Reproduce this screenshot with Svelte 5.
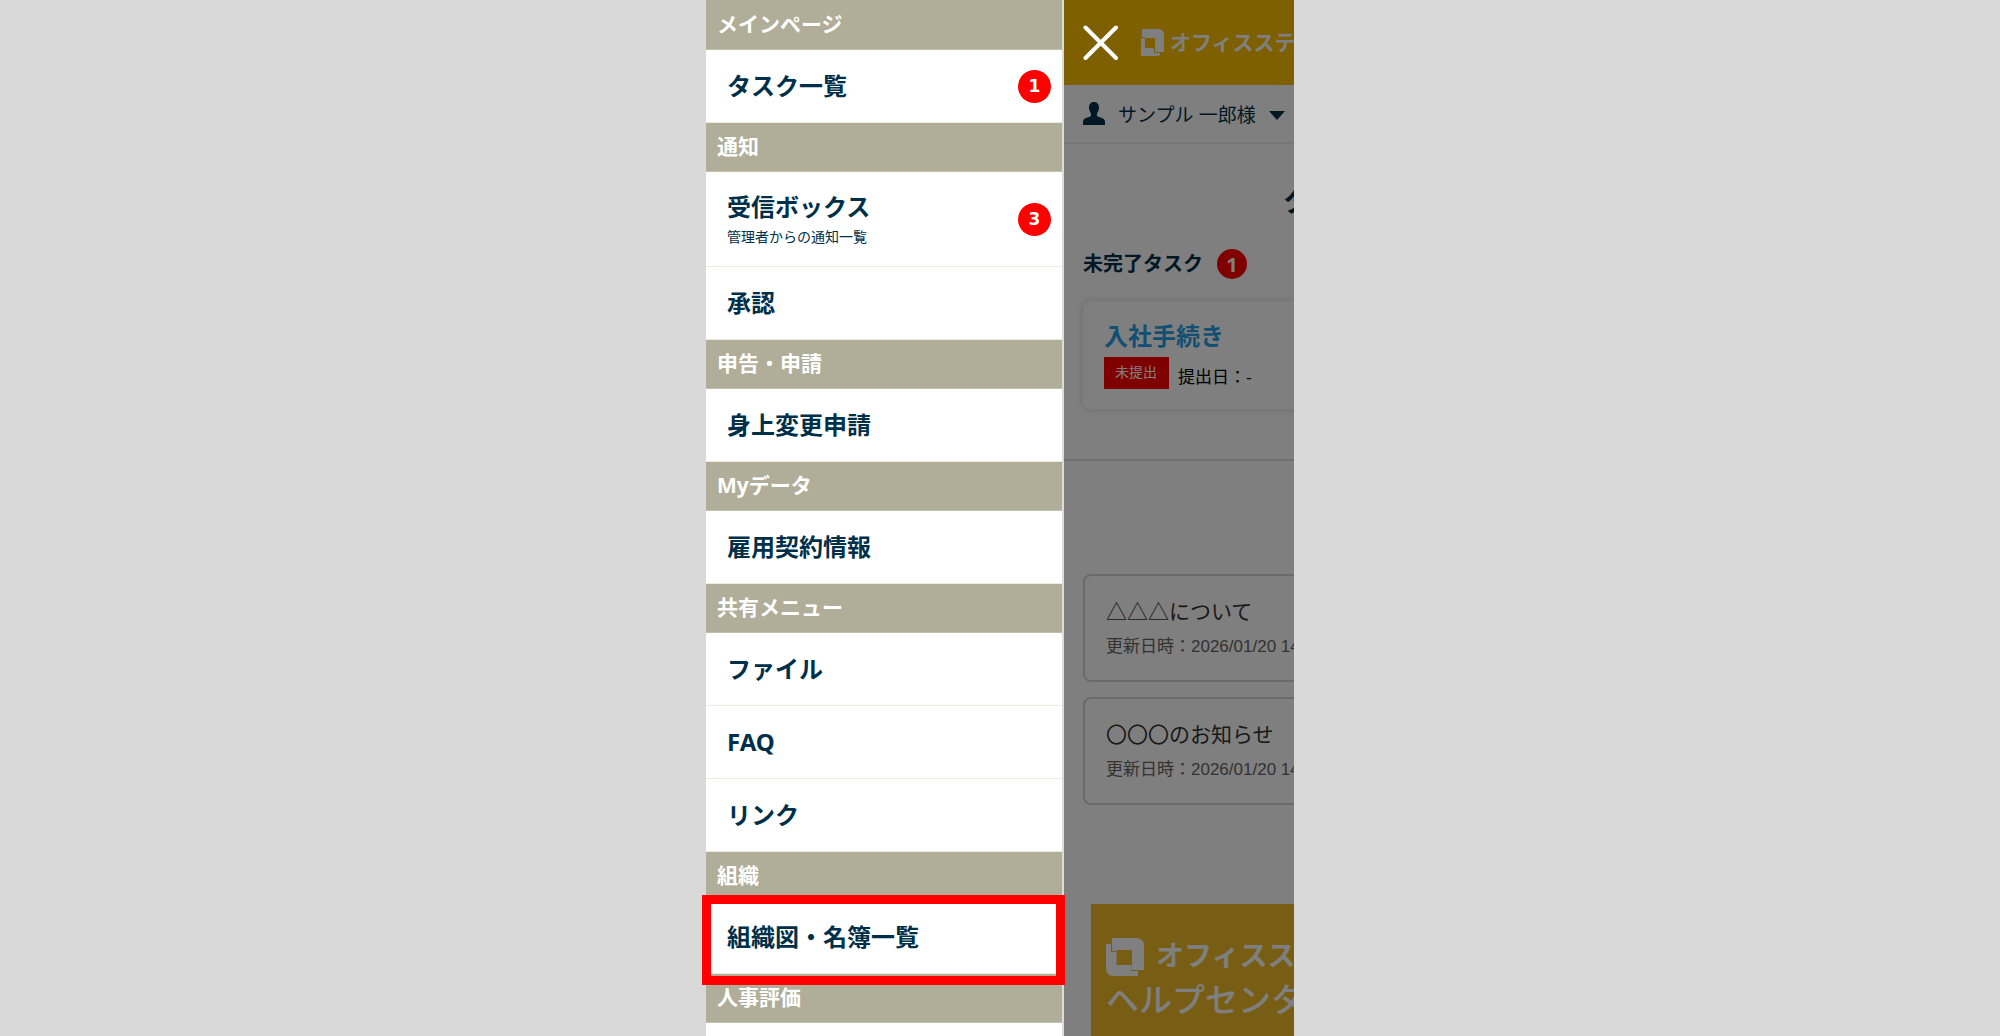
<script>
    const sections = [
        { title: "メインページ", items: [{ label: "タスク一覧", count: 1 }] },
        {
            title: "通知",
            items: [
                { label: "受信ボックス", note: "管理者からの通知一覧", count: 3 },
                { label: "承認" },
            ],
        },
        { title: "申告・申請", items: [{ label: "身上変更申請" }] },
        { title: "Myデータ", items: [{ label: "雇用契約情報" }] },
        { title: "共有メニュー", items: [{ label: "ファイル" }, { label: "FAQ" }, { label: "リンク" }] },
        { title: "組織", items: [{ label: "組織図・名簿一覧", marked: true }] },
        { title: "人事評価", items: [] },
    ];

    const notices = [
        { title: "△△△について", date: "2026/01/20 14" },
        { title: "〇〇〇のお知らせ", date: "2026/01/20 14" },
    ];
</script>

<div class="app">
    <!-- ドロワーメニュー -->
    <nav class="drawer">
        {#each sections as section}
            <h2>{section.title}</h2>
            {#each section.items as item}
                <a href="#menu" class="item" class:tall={item.note} class:marked={item.marked}>
                    <span class="label">
                        {item.label}
                        {#if item.note}
                            <small>{item.note}</small>
                        {/if}
                    </span>
                    {#if item.count}
                        <span class="count">{item.count}</span>
                    {/if}
                </a>
            {/each}
        {/each}
    </nav>

    <!-- 右に押し出された本体ページ -->
    <div class="viewport">
        <div class="page">
            <header>
                <button class="close" aria-label="閉じる">
                    <svg width="36" height="36" viewBox="0 0 36 36">
                        <path d="M2.5 2.5 33 33M33 2.5 2.5 33" stroke="#fff" stroke-width="4" stroke-linecap="round" />
                    </svg>
                </button>
                <a href="#top" class="logo">
                    <svg width="24" height="28" viewBox="0 0 24 28">
                        <path fill="#fff" d="M1 0H17Q23 0 23 6V23H14V9H4V8H1Z" />
                        <path fill="#fff" d="M0 9H4V19H13V24H19V25Q19 27 17 27H0Z" />
                    </svg>
                    <span>オフィスステ</span>
                </a>
            </header>

            <div class="userbar">
                <button class="user">
                    <svg width="22" height="23" viewBox="0 0 22 23">
                        <path fill="#003049" d="M11 0C14.500 0 16 2.500 16 5.500C16 8.500 14.500 10 14 12C13.700 14 14 14.500 16 15L19 16Q22 17 22 20V23H0V20Q0 17 3 16L6 15C8 14.500 8.300 14 8 12C7.500 10 6 8.500 6 5.500C6 2.500 7.500 0 11 0Z" />
                    </svg>
                    <span>サンプル 一郎様</span>
                    <svg class="caret" width="16" height="9" viewBox="0 0 16 9"><path fill="#003049" d="M0 0H16L8 9Z" /></svg>
                </button>
            </div>

            <main>
                <h1>タスク一覧</h1>
                <div class="subhead">
                    <h3>未完了タスク</h3>
                    <span class="count small">1</span>
                </div>
                <div class="task">
                    <a href="#task">入社手続き</a>
                    <div class="status">
                        <span class="tag">未提出</span>
                        <span class="due">提出日：-</span>
                    </div>
                </div>
            </main>

            <section class="notices">
                {#each notices as notice}
                    <a href="#notice" class="notice">
                        <span class="title">{notice.title}</span>
                        <span class="date">更新日時：{notice.date}</span>
                    </a>
                {/each}
            </section>

            <a href="#help" class="help">
                <span class="help-logo">
                    <svg width="38" height="39" viewBox="0 0 38 39">
                        <path fill="#fff" d="M6 0H30Q38 0 38 8V32H26V12H11V13H6Z" />
                        <path fill="#fff" d="M0 6H5V14H10V27H25V33H32V38H8Q0 38 0 30Z" />
                        <path fill="#fff" d="M10 13H11V27H10ZM25 27H26V32H25Z" opacity="0.5" />
                    </svg>
                    <strong>オフィスス</strong>
                </span>
                <span class="help-text">ヘルプセンタ</span>
            </a>
            <div class="overlay"></div>
        </div>
    </div>
</div>

<style>
    :global(body) {
        background: #d9d9d9;
    }

    .app {
        display: flex;
        max-width: 588px;
        height: 100vh;
        margin: 0 auto;
        font-family: "Noto Sans", "Noto Sans CJK JP", sans-serif;
        color: #003049;
        clip-path: inset(0 0 0 -10px);
    }

    a {
        color: inherit;
        text-decoration: none;
    }

    button {
        display: flex;
        align-items: center;
        padding: 0;
        border: none;
        background: none;
        color: inherit;
        font: inherit;
        cursor: pointer;
    }

    h1, h2, h3 {
        margin: 0;
    }

    /* メニュー */
    .drawer {
        flex: 0 0 358px;
        box-sizing: border-box;
        padding-top: 1px;
        border-right: 2px solid #dcdcd8;
        background: linear-gradient(#b0ad98 1px, #fff 1px);
    }

    .drawer h2 {
        box-sizing: border-box;
        height: 49px;
        padding-left: 11px;
        border-bottom: 1px solid #c4c0ae;
        background: #b0ad98;
        color: #fff;
        font-size: 21px;
        line-height: 46px;
    }

    .item {
        display: flex;
        position: relative;
        align-items: center;
        justify-content: space-between;
        box-sizing: border-box;
        height: 73px;
        padding: 0 11px 0 21px;
        border-bottom: 1px solid #f0ebdc;
        background: #fff;
        font-size: 24px;
        font-weight: bold;
        line-height: 36px;
    }

    .item.tall {
        height: 95px;
    }

    .item small {
        display: block;
        font-size: 14px;
        font-weight: normal;
        line-height: 24px;
    }

    .marked::after {
        content: "";
        position: absolute;
        z-index: 3;
        inset: -6px -3px -12px -4px;
        border: 9px solid #f00;
    }

    .count {
        display: flex;
        align-items: center;
        justify-content: center;
        width: 33px;
        height: 33px;
        border-radius: 50%;
        background: #f00;
        color: #fff;
        font-family: "DejaVu Sans", sans-serif;
        font-size: 17px;
        font-weight: bold;
    }

    .count.small {
        width: 30px;
        height: 30px;
        font-family: "Noto Sans", sans-serif;
        font-size: 20px;
    }

    /* ページ */
    .viewport {
        flex: 1;
        min-width: 0;
        overflow: hidden;
    }

    .page {
        position: relative;
        width: 588px;
        height: 100%;
        overflow: hidden;
        background: #fff;
        font-family: "Liberation Sans", "Noto Sans CJK JP", sans-serif;
    }

    .overlay {
        position: absolute;
        z-index: 1;
        inset: 0;
        background: rgba(0, 0, 0, 0.5);
    }

    header {
        display: flex;
        align-items: center;
        gap: 22px;
        height: 85px;
        padding-left: 19px;
        background: #ffc000;
    }

    .close {
        position: relative;
        z-index: 2;
    }

    .logo {
        display: flex;
        align-items: center;
        gap: 5px;
        color: #fff;
        font-size: 21px;
        font-weight: bold;
        line-height: 28px;
        white-space: nowrap;
    }

    .userbar {
        display: flex;
        height: 57px;
        padding-left: 19px;
        border-bottom: 2px solid #eee;
    }

    .user {
        gap: 13px;
        font-size: 19px;
    }

    .caret {
        margin-top: 3px;
    }

    main {
        padding: 37px 19px 50px;
        border-bottom: 2px solid #e0e0e0;
    }

    h1 {
        font-size: 30px;
        line-height: 40px;
        text-align: center;
    }

    .subhead {
        display: flex;
        align-items: center;
        gap: 14px;
        margin: 28px 0 22px;
    }

    h3 {
        font-size: 20px;
        line-height: 30px;
    }

    .task {
        box-sizing: border-box;
        height: 108px;
        padding: 18px 21px;
        border-radius: 8px;
        box-shadow: 0 0 6px 2px rgba(0, 0, 0, 0.1);
        color: #000;
        font-size: 17px;
    }

    .task a {
        display: block;
        color: #22a0e6;
        font-size: 24px;
        font-weight: bold;
        line-height: 36px;
    }

    .status {
        display: flex;
        align-items: center;
        gap: 9px;
        margin-top: 2px;
    }

    .tag {
        padding: 0 12px 2px 11px;
        background: #f00;
        color: #fff;
        font-size: 14px;
        line-height: 30px;
    }

    .due {
        padding-top: 4px;
    }

    .notices {
        display: grid;
        gap: 15px;
        padding: 113px 19px 99px;
    }

    .notice {
        display: flex;
        flex-direction: column;
        justify-content: center;
        box-sizing: border-box;
        height: 108px;
        padding: 2px 0 0 21px;
        border: 2px solid #d4d4d4;
        border-radius: 8px;
        color: #333;
    }

    .title {
        font-size: 21px;
        line-height: 36px;
    }

    .date {
        color: #666;
        font-size: 17px;
        line-height: 34px;
    }

    .help {
        display: block;
        height: 180px;
        margin: 0 27px;
        padding: 31px 15px;
        background: #f0bc28;
        color: #fff;
        white-space: nowrap;
    }

    .help-logo {
        display: flex;
        align-items: center;
        gap: 12px;
        font-size: 28px;
        line-height: 44px;
    }

    .help-text {
        font-size: 33px;
        font-weight: 500;
        line-height: 44px;
    }
</style>
